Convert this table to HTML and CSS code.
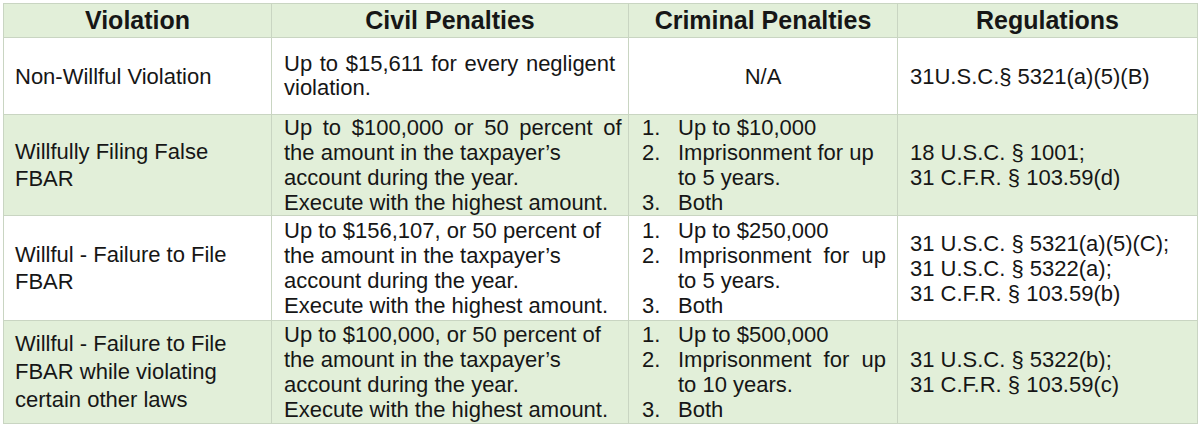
FILE: index.html
```html
<!DOCTYPE html>
<html lang="en">
<head>
<meta charset="utf-8">
<title>FBAR Penalties</title>
<link rel="stylesheet" href="styles.css">
</head>
<body>
<div class="wrap">
<table class="penalties">
  <colgroup>
    <col class="c-viol">
    <col class="c-civil">
    <col class="c-crim">
    <col class="c-reg">
  </colgroup>
  <thead>
    <tr class="head">
      <th>Violation</th>
      <th>Civil Penalties</th>
      <th>Criminal Penalties</th>
      <th>Regulations</th>
    </tr>
  </thead>
  <tbody>
    <tr class="r1">
      <td class="viol">Non-Willful Violation</td>
      <td class="civil tight"><span class="spread-s">Up to $15,611 for every negligent</span><br>violation.</td>
      <td class="crim na">N/A</td>
      <td class="reg">31U.S.C.§ 5321(a)(5)(B)</td>
    </tr>
    <tr class="r2 green">
      <td class="viol">Willfully Filing False<br>FBAR</td>
      <td class="civil"><span class="spread">Up to $100,000 or 50 percent of</span><br>the amount in the taxpayer’s<br>account during the year.<br>Execute with the highest amount.</td>
      <td class="crim">
        <ol class="list">
          <li>Up to $10,000</li>
          <li>Imprisonment for up to 5 years.</li>
          <li>Both</li>
        </ol>
      </td>
      <td class="reg">18 U.S.C. § 1001;<br>31 C.F.R. § 103.59(d)</td>
    </tr>
    <tr class="r3">
      <td class="viol">Willful - Failure to File<br>FBAR</td>
      <td class="civil">Up to $156,107, or 50 percent of<br>the amount in the taxpayer’s<br>account during the year.<br>Execute with the highest amount.</td>
      <td class="crim">
        <ol class="list just">
          <li>Up to $250,000</li>
          <li>Imprisonment for up to 5 years.</li>
          <li>Both</li>
        </ol>
      </td>
      <td class="reg">31 U.S.C. § 5321(a)(5)(C);<br>31 U.S.C. § 5322(a);<br>31 C.F.R. § 103.59(b)</td>
    </tr>
    <tr class="r4 green">
      <td class="viol loose">Willful - Failure to File<br>FBAR while violating<br>certain other laws</td>
      <td class="civil">Up to $100,000, or 50 percent of<br>the amount in the taxpayer’s<br>account during the year.<br>Execute with the highest amount.</td>
      <td class="crim">
        <ol class="list just">
          <li>Up to $500,000</li>
          <li>Imprisonment for up to 10 years.</li>
          <li>Both</li>
        </ol>
      </td>
      <td class="reg">31 U.S.C. § 5322(b);<br>31 C.F.R. § 103.59(c)</td>
    </tr>
  </tbody>
</table>
</div>
</body>
</html>
```

FILE: styles.css
```css
html, body {
  margin: 0;
  padding: 0;
  background: #ffffff;
}

.wrap {
  padding: 3px 3px 0 3px;
}

.penalties {
  border-collapse: collapse;
  table-layout: fixed;
  width: 1194px;
  font-family: "Liberation Sans", Arial, sans-serif;
  font-size: 22px;
  color: #161616;
}

.c-viol { width: 268px; }
.c-civil { width: 357px; }
.c-crim { width: 269px; }
.c-reg { width: 300px; }

.penalties th,
.penalties td {
  border: 1px solid #c9d5c2;
  vertical-align: middle;
  text-align: left;
  padding: 0;
  line-height: 25px;
}

.penalties .head {
  height: 34px;
  background: #e2efd9;
}

.penalties .head th {
  text-align: center;
  font-weight: bold;
  font-size: 25px;
  line-height: 30px;
  padding-bottom: 2px;
}

.penalties .green {
  background: #e2efd9;
}

.penalties .r1 { height: 77px; }
.penalties .r2 { height: 101px; }
.penalties .r3 { height: 105px; }
.penalties .r4 { height: 103px; }

.penalties .viol {
  padding-left: 11px;
  line-height: 27px;
  font-size: 22px;
}

.penalties .viol.loose {
  line-height: 28px;
}

.penalties .civil {
  padding-left: 12px;
  padding-right: 2px;
}

.penalties .civil.tight {
  line-height: 24px;
}

.spread {
  word-spacing: 4.5px;
}

.spread-s {
  word-spacing: 1.5px;
}

.penalties .crim {
  padding-left: 13px;
  padding-right: 11px;
}

.penalties .crim.na {
  text-align: center;
  padding-left: 0;
  padding-right: 0;
}

.penalties .reg {
  padding-left: 12px;
}

.list {
  list-style: none;
  margin: 0;
  padding: 0;
  counter-reset: item;
}

.list li {
  counter-increment: item;
  padding-left: 36px;
}

.list li::before {
  content: counter(item) ".";
  display: inline-block;
  width: 36px;
  margin-left: -36px;
}

.list.just li {
  text-align: justify;
}
```
